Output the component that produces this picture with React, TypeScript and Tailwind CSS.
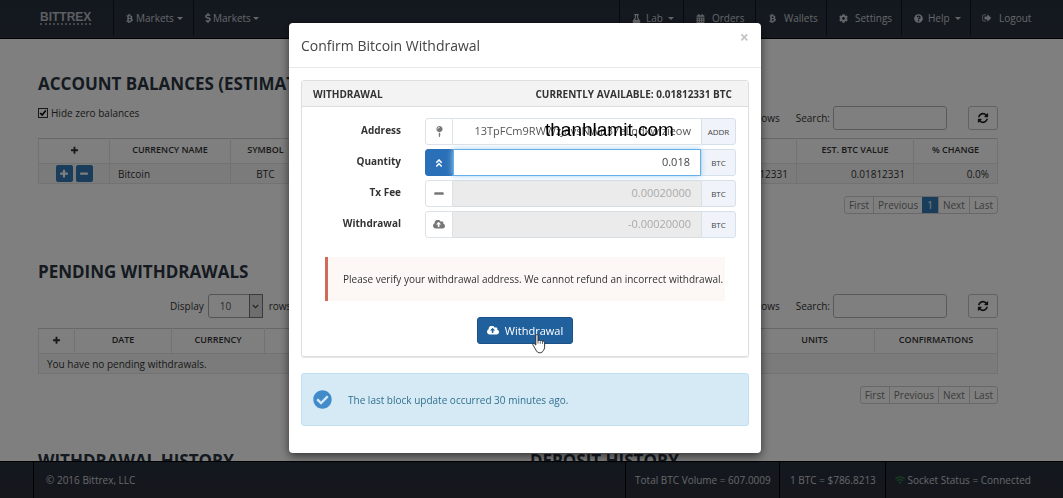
import React from "react";
import {
  FaBtc, FaFlask, FaCalendarAlt, FaCog, FaQuestionCircle, FaMapPin,
  FaAngleDoubleUp, FaCheckCircle, FaWifi, FaChevronDown, FaDollarSign,
} from "react-icons/fa";

type IconProps = { className?: string };

function Glyph({ d, viewBox = "0 0 1792 1792", className }: { d: string; viewBox?: string; className?: string }) {
  return (
    <svg viewBox={viewBox} className={className} fill="currentColor" aria-hidden="true">
      <path d={d} />
    </svg>
  );
}

const Plus = ({ className }: IconProps) => (
  <Glyph className={className} d="M1600 736v192q0 40-28 68t-68 28h-416v416q0 40-28 68t-68 28h-192q-40 0-68-28t-28-68v-416h-416q-40 0-68-28t-28-68v-192q0-40 28-68t68-28h416v-416q0-40 28-68t68-28h192q40 0 68 28t28 68v416h416q40 0 68 28t28 68z" />
);
const Minus = ({ className }: IconProps) => (
  <Glyph className={className} d="M1600 736v192q0 40-28 68t-68 28h-1216q-40 0-68-28t-28-68v-192q0-40 28-68t68-28h1216q40 0 68 28t28 68z" />
);
const Caret = () => <Glyph className="h-[3px] w-[6px]" viewBox="0 0 6 3" d="M0 0h6L3 3z" />;
const Refresh = ({ className }: IconProps) => (
  <Glyph className={className} d="M1639 1056q0 5-1 7-64 268-268 434.5t-478 166.5q-146 0-282.5-55t-243.5-157l-129 129q-19 19-45 19t-45-19-19-45v-448q0-26 19-45t45-19h448q26 0 45 19t19 45-19 45l-137 137q71 66 161 102t187 36q134 0 250-65t186-179q11-17 53-117 8-23 30-23h192q13 0 22.5 9.5t9.5 22.5zm25-800v448q0 26-19 45t-45 19h-448q-26 0-45-19t-19-45 19-45l138-138q-148-137-349-137-134 0-250 65t-186 179q-11 17-53 117-8 23-30 23h-199q-13 0-22.5-9.5t-9.5-22.5v-7q65-268 270-434.5t480-166.5q146 0 284 55.5t245 156.5l130-129q19-19 45-19t45 19 19 45z" />
);
const CloudUpload = ({ className }: IconProps) => (
  <Glyph className={className} viewBox="-64 192 1920 1408" d="M1216 864q0-14-9-23l-352-352q-9-9-23-9t-23 9l-351 351q-10 12-10 24 0 14 9 23t23 9h224v352q0 13 9.5 22.5t22.5 9.5h192q13 0 22.5-9.5t9.5-22.5v-352h224q13 0 22.5-9.5t9.5-22.5zm640 288q0 159-112.5 271.5t-271.5 112.5h-1088q-185 0-316.5-131.5t-131.5-316.5q0-130 70-240t188-165q-2-30-2-43 0-212 150-362t362-150q156 0 285.5 87t188.5 231q71-62 166-62 106 0 181 75t75 181q0 76-41 138 130 31 213.5 135.5t83.5 238.5z" />
);
const SignOut = ({ className }: IconProps) => (
  <Glyph className={className} d="M704 1440q0 4 1 20t.5 26.5-3 23.5-10 19.5-20.5 6.5h-320q-119 0-203.5-84.5t-84.5-203.5v-704q0-119 84.5-203.5t203.5-84.5h320q13 0 22.5 9.5t9.5 22.5q0 4 1 20t.5 26.5-3 23.5-10 19.5-20.5 6.5h-320q-66 0-113 47t-47 113v704q0 66 47 113t113 47h312l11.5 1 11.5 3 8 5.5 7 9 2 13.5zm928-544q0 26-19 45l-544 544q-19 19-45 19t-45-19-19-45v-288h-448q-26 0-45-19t-19-45v-384q0-26 19-45t45-19h448v-288q0-26 19-45t45-19 45 19l544 544q19 19 19 45z" />
);

function Pointer({ className }: IconProps) {
  return (
    <svg viewBox="0 0 17 22" className={className} aria-hidden="true">
      <path
        d="M5 1.5c0-1 2.4-1 2.4 0v6c.3-1 2.3-.9 2.5.3.4-.9 2.3-.7 2.5.6.5-.8 2.200-.5 2.300.8v5.300c0 1.500-.6 2.600-1.400 3.600-1.200 3.200-5.800 3.400-7.400.8C4.500 16.800 3.300 14.300 2 12.400c-.9-1.400.4-2.600 1.600-1.600L5 12.200z"
        fill="#fff" stroke="#222" strokeWidth="1" strokeLinejoin="round"
      />
      <path d="M7.400 7.500v3M9.900 8.300v2.400M12.400 8.900v2" stroke="#222" strokeWidth=".8" fill="none" />
    </svg>
  );
}

const navItem = "flex h-9 items-center border-l border-[#10151f] text-[#c9ced4]";

function Header() {
  return (
    <header className="flex h-[39px] shrink-0 border-b border-black bg-linear-to-b from-[#26313f] to-[#2c333f] text-[10px] leading-4">
      <a href="#home" className="flex h-9 w-[113px] items-center pl-10">
        <span className="border-b-2 border-dotted border-[#8b9096] text-[12px] leading-3 font-bold text-[#b9bdc2] font-['Liberation_Sans',sans-serif]">BITTREX</span>
      </a>
      <nav className="flex flex-1 justify-between">
        <div className="flex">
          <a href="#btc" className={`${navItem} w-20 gap-[3px] pl-3`}>
            <FaBtc className="h-[9px] w-[7px]" />Markets<Caret />
          </a>
          <a href="#usd" className={`${navItem} w-20 gap-[2px] pl-[11px]`}>
            <FaDollarSign className="h-[10px] w-[6px]" />Markets<Caret />
          </a>
        </div>
        <div className="flex pr-[22px]">
          <a href="#lab" className={`${navItem} w-16 gap-[5px] pl-3`}>
            <FaFlask className="size-[9px]" />Lab<Caret />
          </a>
          <a href="#orders" className={`${navItem} w-[72px] gap-[7px] pl-3`}>
            <FaCalendarAlt className="size-[9px]" />Orders
          </a>
          <a href="#wallets" className={`${navItem} w-[71px] gap-[7px] pl-3`}>
            <FaBtc className="size-[9px]" />Wallets
          </a>
          <a href="#settings" className={`${navItem} w-[75px] gap-[7px] pl-3`}>
            <FaCog className="size-[9px]" />Settings
          </a>
          <a href="#help" className={`${navItem} w-[69px] gap-[5px] pl-3`}>
            <FaQuestionCircle className="size-[9px]" />Help<Caret />
          </a>
          <a href="#logout" className={`${navItem} w-[71px] gap-[7px] pl-[11px]`}>
            <SignOut className="size-[10px]" />Logout
          </a>
        </div>
      </nav>
    </header>
  );
}

function Toolbar({ id, children }: { id: string; children?: React.ReactNode }) {
  return (
    <div className="flex h-6 items-center justify-between">
      <div className="flex items-center">{children}</div>
      <div className="flex items-center">
        <span className="mr-4">rows</span>
        <label htmlFor={id} className="mr-[3px]">Search:</label>
        <input id={id} type="search" className="h-6 w-[114px] rounded-[3px] border border-[#b5b5b5] bg-white px-2" />
        <button type="button" aria-label="Refresh" className="ml-[21px] flex h-6 w-[30px] items-center justify-center rounded-[3px] border border-[#c4c4c4] bg-white text-[#222]">
          <Refresh className="size-3" />
        </button>
      </div>
    </div>
  );
}

function Pager({ pages }: { pages: string[] }) {
  return (
    <div className="mt-3 flex justify-end">
      <div className="flex overflow-hidden rounded-[3px] border border-[#d0d0d0] leading-4 text-[#777]">
        {pages.map((p) => (
          <button
            key={p}
            type="button"
            className={p === "1" ? "bg-[#337ab7] px-[5px] text-white" : "border-l border-[#d0d0d0] px-[4px] first:border-l-0"}
          >
            {p}
          </button>
        ))}
      </div>
    </div>
  );
}

const th = "h-[25px] border border-[#e4e4e4] border-t-[#cfcfcf] p-0 pb-[2px] text-center font-semibold text-[#333] text-[9px]";
const td = "h-5 border border-[#e4e4e4] px-2 py-0";
const heading = "text-[17px] leading-6 font-bold text-[#2a3542]";

function Balances() {
  return (
    <section className="pt-[33px]">
      <h2 className={heading}>ACCOUNT BALANCES (ESTIMATED VALUE: 0.01812331 BTC)</h2>
      <div className="mt-[10px]">
        <Toolbar id="search-balances">
          <label className="flex items-center gap-[3px] pb-[10px]">
            <input type="checkbox" defaultChecked className="size-[10px] appearance-none border border-[#333] bg-white bg-[url('data:image/svg+xml,%3Csvg%20xmlns=%22http://www.w3.org/2000/svg%22%20viewBox=%220%200%2010%2010%22%3E%3Cpath%20d=%22M1.500%205l2.500%202.500L8.500%202%22%20fill=%22none%22%20stroke=%22%23000%22%20stroke-width=%222%22/%3E%3C/svg%3E')]" />
            Hide zero balances
          </label>
        </Toolbar>
      </div>
      <table className="mt-2 w-full table-fixed border-collapse bg-white">
        <colgroup>
          <col className="w-[71px]" /><col className="w-[121px]" /><col className="w-[70px]" />
          <col /><col /><col className="w-[117px]" /><col className="w-[84px]" />
        </colgroup>
        <thead>
          <tr>
            <th className={th}><Plus className="mx-auto size-[9px]" /></th>
            <th className={th}>CURRENCY NAME</th>
            <th className={th}>SYMBOL</th>
            <th className={th}>AVAILABLE BALANCE</th>
            <th className={th}>TOTAL</th>
            <th className={th}>EST. BTC VALUE</th>
            <th className={th}>% CHANGE</th>
          </tr>
        </thead>
        <tbody className="bg-[#f6f6f6]">
          <tr>
            <td className={td}>
              <div className="flex justify-center gap-[3px]">
                <button type="button" aria-label="Deposit" className="flex size-[17px] items-center justify-center rounded-[2px] bg-[#337ab7] text-white"><Plus className="size-[10px]" /></button>
                <button type="button" aria-label="Withdraw" className="flex size-[17px] items-center justify-center rounded-[2px] bg-[#337ab7] text-white"><Minus className="size-[10px]" /></button>
              </div>
            </td>
            <td className={td}>Bitcoin</td>
            <td className={`${td} text-center`}>BTC</td>
            <td className={`${td} text-right`}>0.01812331</td>
            <td className={`${td} text-right`}>0.01812331</td>
            <td className={`${td} text-right`}>0.01812331</td>
            <td className={`${td} text-right`}>0.0%</td>
          </tr>
        </tbody>
      </table>
      <Pager pages={["First", "Previous", "1", "Next", "Last"]} />
    </section>
  );
}

function Pending() {
  return (
    <section className="pt-[46px]">
      <h2 className={heading}>PENDING WITHDRAWALS</h2>
      <div className="mt-[10px]">
        <Toolbar id="search-pending">
          <label htmlFor="rows" className="ml-[132px]">Display</label>
          <span className="relative mr-[6px] ml-1 flex">
            <select id="rows" className="h-6 w-[55px] appearance-none rounded-[3px] border border-[#aaa] bg-white pl-[11px] text-[#555]"><option>10</option></select>
            <span className="pointer-events-none absolute inset-y-0 right-0 flex w-[14px] items-center justify-center border border-[#777] bg-[#ddd]"><FaChevronDown className="size-[7px]" /></span>
          </span>
          rows
        </Toolbar>
      </div>
      <table className="mt-[10px] w-full table-fixed border-collapse bg-white">
        <colgroup>
          <col className="w-[36px]" /><col className="w-[97px]" /><col className="w-[93px]" />
          <col /><col className="w-[120px]" /><col className="w-[123px]" />
        </colgroup>
        <thead>
          <tr>
            <th className={th}><Plus className="mx-auto size-[9px]" /></th>
            <th className={th}>DATE</th>
            <th className={th}>CURRENCY</th>
            <th className={th}>STATUS</th>
            <th className={th}>UNITS</th>
            <th className={th}>CONFIRMATIONS</th>
          </tr>
        </thead>
        <tbody className="bg-[#f6f6f6]">
          <tr><td colSpan={6} className={td}>You have no pending withdrawals.</td></tr>
        </tbody>
      </table>
      <Pager pages={["First", "Previous", "Next", "Last"]} />
    </section>
  );
}

function Footer() {
  const cell = "flex items-center border-l border-black";
  return (
    <footer className="flex h-[37px] shrink-0 justify-between border-t border-black bg-linear-to-b from-[#26313f] to-[#2b2e37] pl-[33px] text-[10px] leading-4 text-[#c9ced4]">
      <div className={`${cell} pl-3`}>© 2016 Bittrex, LLC</div>
      <div className="flex">
        <div className={`${cell} w-[154px] justify-center`}>Total BTC Volume = 607.0009</div>
        <div className={`${cell} w-[106px] justify-center`}>1 BTC = $786.8213</div>
        <div className={`${cell} gap-[2px] pr-[32px] pl-[9px]`}><FaWifi className="size-[10px] text-[#2f8240]" />Socket Status = Connected</div>
      </div>
    </footer>
  );
}

type FieldProps = {
  id: string; label: string; icon: React.ReactNode; unit: string; value: string;
  active?: boolean; disabled?: boolean; overlay?: string;
};

function Field({ id, label, icon, unit, value, active, disabled, overlay }: FieldProps) {
  return (
    <div className="flex">
      <label htmlFor={id} className="w-[99px] pt-1 text-right text-[10px] leading-4 font-bold text-[#333]">{label}</label>
      <div className="relative ml-6 flex h-[27px] flex-1">
        <span className={`flex w-7 items-center justify-center rounded-l-[3px] border ${active ? "border-[#2a70b8] bg-[#2a70b8] text-white" : "border-[#dde2e8] bg-white text-[#777]"}`}>{icon}</span>
        <input
          id={id}
          defaultValue={value}
          disabled={disabled}
          className={`w-0 flex-1 px-[10px] pb-[2px] text-right text-[11px] ${active ? "z-10 border border-[#66afe9] bg-white text-[#444] shadow-[0_0_6px_#a5d0f2] outline-none" : disabled ? "border-y border-[#d8dde2] bg-[#ebebeb] text-[#aaa]" : "border-y border-[#dde2e8] bg-white text-[#555]"}`}
        />
        <span className="flex w-[35px] items-center justify-center rounded-r-[3px] border border-[#d5e0ea] bg-[#f0f4fa] text-[8px] text-[#444]">{unit}</span>
        {overlay && <span className="absolute top-0 left-[120px] z-20 text-[19px] leading-6 text-black font-['Liberation_Sans',sans-serif]">{overlay}</span>}
      </div>
    </div>
  );
}

function WithdrawalDialog() {
  return (
    <div className="fixed inset-0 z-50 flex items-start justify-center bg-black/50 pt-[23px]">
      <div role="dialog" aria-labelledby="dialog-title" className="mr-[13px] w-[472px] rounded-[4px] bg-white pb-[27px] shadow-[0_3px_10px_rgba(0,0,0,0.6)]">
        <div className="flex h-[45px] justify-between border-b border-[#e8e8e8] pr-3 pl-3">
          <h1 id="dialog-title" className="pt-[13px] text-[14px] leading-5 text-[#444]">Confirm Bitcoin Withdrawal</h1>
          <button type="button" aria-label="Close" className="h-7 text-[16px] leading-4 font-bold text-[#c4c4c4]">×</button>
        </div>
        <div className="px-3 pt-3">
          <div className="rounded-[3px] border border-[#dcdfe2] shadow-[0_1px_1px_#e5e5e5]">
            <div className="flex h-[26px] items-center justify-between border-b border-[#ddd] bg-[#f3f3f3] pr-4 pl-[11px] text-[10px] font-bold text-[#333]">
              <span>WITHDRAWAL</span>
              <span>CURRENTLY AVAILABLE: 0.01812331 BTC</span>
            </div>
            <form className="flex flex-col gap-1 pt-[11px] pr-3 pb-3" onSubmit={(e) => e.preventDefault()}>
              <Field id="address" label="Address" icon={<FaMapPin className="size-[11px]" />} unit="ADDR" value="13TpFCm9RWWzJdvsNWn37eLqdkwizieow" overlay="thanhlamit.com" />
              <Field id="quantity" label="Quantity" icon={<FaAngleDoubleUp className="size-[10px]" />} unit="BTC" value="0.018" active />
              <Field id="fee" label="Tx Fee" icon={<Minus className="size-[12px]" />} unit="BTC" value="0.00020000" disabled />
              <Field id="total" label="Withdrawal" icon={<CloudUpload className="h-[9px] w-[12px]" />} unit="BTC" value="-0.00020000" disabled />
              <p className="mt-[15px] mr-[11px] ml-[23px] border-l-[3px] border-[#d26a5c] bg-[#fdf7f6] py-[14px] pl-[15px] text-[10px] leading-4 text-[#333]">
                Please verify your withdrawal address. We cannot refund an incorrect withdrawal.
              </p>
              <div className="mt-3 flex justify-center pl-3">
                <button type="submit" className="relative flex h-[27px] w-24 items-center justify-center gap-[6px] rounded-[3px] border border-[#1d5287] bg-[#20609d] text-[11px] text-white">
                  <CloudUpload className="h-[9px] w-[12px]" />Withdrawal
                  <Pointer className="absolute top-[16px] left-[53px] h-[20px] w-[16px]" />
                </button>
              </div>
            </form>
          </div>
          <div className="mt-4 flex h-[53px] items-center gap-4 rounded-[3px] border border-[#bfe0ee] bg-[#d6eaf6] pl-[11px] text-[10px] text-[#31708f]">
            <FaCheckCircle className="size-[19px] text-[#428bca]" />
            The last block update occurred 30 minutes ago.
          </div>
        </div>
      </div>
    </div>
  );
}

export default function App() {
  return (
    <div className="flex h-screen flex-col overflow-hidden bg-white text-[10px] leading-4 text-[#333] font-['Open_Sans',sans-serif]">
      <Header />
      <main className="min-h-0 flex-1 overflow-hidden pr-[65px] pl-[38px]">
        <Balances />
        <Pending />
        <div className="grid grid-cols-2 gap-6 pt-[45px]">
          <h2 className={heading}>WITHDRAWAL HISTORY</h2>
          <h2 className={heading}>DEPOSIT HISTORY</h2>
        </div>
      </main>
      <Footer />
      <WithdrawalDialog />
    </div>
  );
}
